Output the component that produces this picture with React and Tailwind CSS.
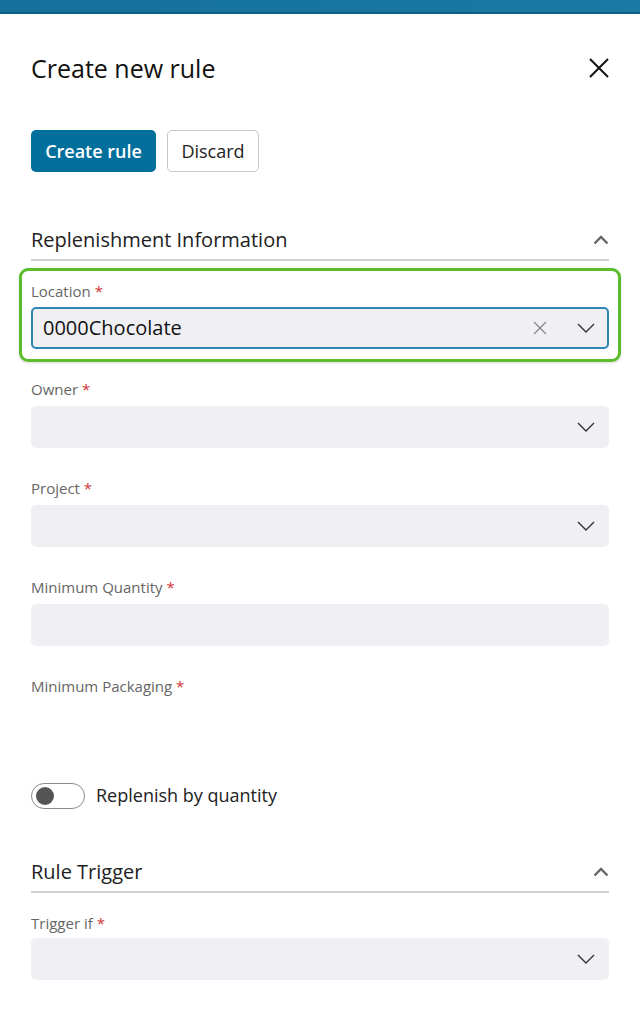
import React from 'react';

const font = { fontFamily: '"Open Sans", "Noto Sans", sans-serif' };

const ChevronDown = () => (
  <svg width="18" height="10" viewBox="0 0 18 10" fill="none" stroke="#333" strokeWidth="1.4">
    <path d="M1 1l8 8 8-8" />
  </svg>
);

const ChevronUp = () => (
  <svg width="16" height="10" viewBox="0 0 16 10" fill="none" stroke="#666" strokeWidth="2.4">
    <path d="M1.5 8.5L8 2l6.5 6.5" />
  </svg>
);

const Label = ({ children }) => (
  <div className="text-[15px] leading-[20px] text-[#666]">
    {children} <span className="text-[#d13438]">*</span>
  </div>
);

const Select = ({ className = '' }) => (
  <div className={`h-[42px] rounded-[5px] bg-[#f0eff4] flex items-center justify-end pr-[14px] ${className}`}>
    <ChevronDown />
  </div>
);

const SectionHeader = ({ title }) => (
  <div className="flex items-center justify-between border-b-2 border-[#d0d0d0] pb-[5px]">
    <h3 className="text-[20px] leading-[28px] text-[#222]">{title}</h3>
    <ChevronUp />
  </div>
);

export default function App() {
  return (
    <div className="min-h-[1012px] bg-white" style={font}>
      {/* top bar */}
      <div className="h-[14px] bg-gradient-to-r from-[#15709c] to-[#1a7aa3] border-b-[2px] border-[#0f5f86]" />

      <div className="px-[31px]">
        <div className="mt-[38px] flex items-center justify-between">
          <h1 className="text-[25px] leading-[32px] text-[#111]">Create new rule</h1>
          <svg width="22" height="22" viewBox="0 0 22 22" stroke="#111" strokeWidth="2" className="mr-[-1px]">
            <path d="M2 2l18 18M20 2L2 20" />
          </svg>
        </div>

        <div className="mt-[46px] flex gap-[11px]">
          <button className="h-[42px] w-[125px] rounded-[5px] bg-[#006f9c] text-white text-[18px] font-semibold">
            Create rule
          </button>
          <button className="h-[42px] w-[92px] rounded-[5px] border border-[#c8c8c8] bg-white text-[#222] text-[18px]">
            Discard
          </button>
        </div>

        <div className="mt-[54px]">
          <SectionHeader title="Replenishment Information" />
        </div>

        {/* highlighted location field */}
        <div className="mt-[7px] mx-[-12px] rounded-[9px] border-[3px] border-[#5bbd2b] px-[9px] pt-[10px] pb-[10px] shadow-[0_1px_3px_rgba(0,0,0,0.15)]">
          <Label>Location</Label>
          <div className="mt-[6px] h-[42px] rounded-[5px] bg-[#f0eff4] border-2 border-[#2f86b4] flex items-center pl-[10px] pr-[12px]">
            <span className="flex-1 text-[20px] text-[#111]">0000Chocolate</span>
            <svg width="14" height="14" viewBox="0 0 14 14" stroke="#888" strokeWidth="1.3" className="mr-[30px]">
              <path d="M1 1l12 12M13 1L1 13" />
            </svg>
            <ChevronDown />
          </div>
        </div>

        <div className="mt-[17px]">
          <Label>Owner</Label>
          <Select className="mt-[7px]" />
        </div>

        <div className="mt-[30px]">
          <Label>Project</Label>
          <Select className="mt-[7px]" />
        </div>

        <div className="mt-[30px]">
          <Label>Minimum Quantity</Label>
          <div className="mt-[7px] h-[42px] rounded-[5px] bg-[#f0eff4]" />
        </div>

        <div className="mt-[30px]">
          <Label>Minimum Packaging</Label>
        </div>

        <div className="mt-[86px] flex items-center gap-[11px]">
          <div className="w-[54px] h-[26px] rounded-full border border-[#8a8a8a] flex items-center px-[4px]">
            <div className="w-[18px] h-[18px] rounded-full bg-[#555]" />
          </div>
          <span className="text-[18px] text-[#222]">Replenish by quantity</span>
        </div>

        <div className="mt-[49px]">
          <SectionHeader title="Rule Trigger" />
        </div>

        <div className="mt-[20px]">
          <Label>Trigger if</Label>
          <Select className="mt-[5px]" />
        </div>
      </div>
    </div>
  );
}
